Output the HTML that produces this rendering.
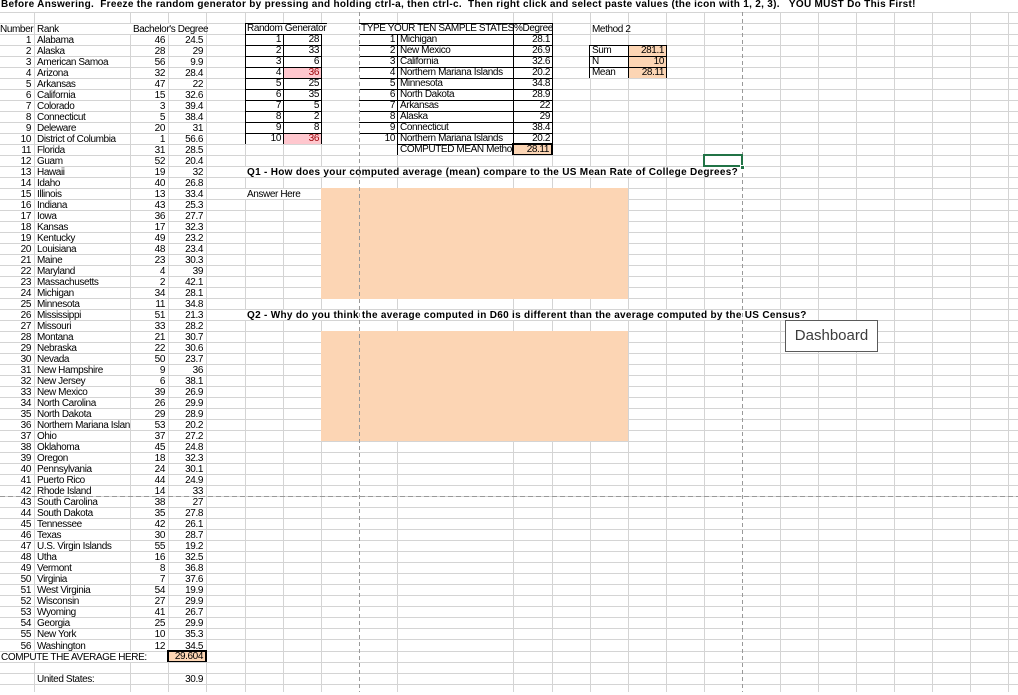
<!DOCTYPE html>
<html><head><meta charset="utf-8"><style>
*{margin:0;padding:0;box-sizing:border-box}
body{width:1018px;height:692px;overflow:hidden;background:#fff;font-family:"Liberation Sans",Arial,sans-serif;font-size:10px;color:#000;position:relative}
.v{position:absolute;top:12px;height:680px;width:1px;background:#d4d4d4;z-index:0}
#rows{position:absolute;left:0;top:0;width:1018px;z-index:1}
.r{position:relative;height:11px;border-top:1px solid #d4d4d4}
.t{height:12px;border:0}
.c{position:absolute;top:0;height:10px;line-height:11px;white-space:nowrap;letter-spacing:-.4px}
.a{left:0;width:34px;text-align:right;padding-right:3px}
.bb{left:34px;width:96px;padding-left:3px;overflow:hidden}
.cc{left:130px;width:38px;text-align:right;padding-right:3px}
.dd{left:168px;width:38px;text-align:right;padding-right:3px}
.x{border:1px solid #000;top:-1px;height:12px;line-height:10px;background:#fff;overflow:hidden}
.rt{text-align:right;padding-right:2px}
.lt{padding-left:2px}
.F{left:245px;width:39px}.G{left:283px;width:39px}.I{left:359px;width:39px;border-left:0}
.J{left:397px;width:117px}.K{left:513px;width:40px}.M{left:589px;width:40px}.N{left:628px;width:39px}
.red{background:#ffc7ce;color:#9c0006}
.pe{background:#fcd5b4}
.w{background:#fff}
.bold{font-weight:bold;letter-spacing:.3px}
.box{position:absolute;background:#fcd5b4;z-index:2}
.dv{position:absolute;top:12px;height:680px;width:1px;z-index:3;background:repeating-linear-gradient(to bottom,#999 0 4px,transparent 4px 7px)}
.dh{position:absolute;left:0;width:1018px;height:1px;top:496px;z-index:3;background:repeating-linear-gradient(to right,#999 0 5px,transparent 5px 8px)}
</style></head><body>
<div class="v" style="left:34px"></div><div class="v" style="left:130px"></div><div class="v" style="left:168px"></div><div class="v" style="left:206px"></div><div class="v" style="left:245px"></div><div class="v" style="left:283px"></div><div class="v" style="left:321px"></div><div class="v" style="left:397px"></div><div class="v" style="left:513px"></div><div class="v" style="left:552px"></div><div class="v" style="left:590px"></div><div class="v" style="left:628px"></div><div class="v" style="left:666px"></div><div class="v" style="left:704px"></div><div class="v" style="left:780px"></div><div class="v" style="left:818px"></div><div class="v" style="left:856px"></div><div class="v" style="left:894px"></div><div class="v" style="left:932px"></div><div class="v" style="left:970px"></div><div class="v" style="left:1008px"></div>

<div id="rows">
<div class="r t"><div class="c bold w" style="left:0;width:1018px;height:12px;line-height:10px;padding-left:1px">Before Answering.&nbsp; Freeze the random generator by pressing and holding ctrl-a, then ctrl-c.&nbsp; Then right click and select paste values (the icon with 1, 2, 3).&nbsp;&nbsp; YOU MUST Do This First!</div></div>
<div class="r"></div>
<div class="r"><div class="c w" style="left:0;width:34px;overflow:hidden">Number</div><div class="c bb">Rank</div><div class="c w" style="left:130px;width:76px;padding-left:3px">Bachelor's Degree</div><div class="c x w" style="left:245px;width:82px;border-right:0;border-bottom:0;padding-left:1px;overflow:visible">Random Generator</div><div class="c x I w" style="width:155px;border-right:0;border-bottom:0;padding-left:2px">TYPE YOUR TEN SAMPLE STATES</div><div class="c x K">%Degree</div><div class="c" style="left:592px">Method 2</div></div>
<div class="r"><div class="c a">1</div><div class="c bb">Alabama</div><div class="c cc">46</div><div class="c dd">24.5</div><div class="c x F rt">1</div><div class="c x G rt">28</div><div class="c x I rt">1</div><div class="c x J lt">Michigan</div><div class="c x K rt">28.1</div></div>
<div class="r"><div class="c a">2</div><div class="c bb">Alaska</div><div class="c cc">28</div><div class="c dd">29</div><div class="c x F rt">2</div><div class="c x G rt">33</div><div class="c x I rt">2</div><div class="c x J lt">New Mexico</div><div class="c x K rt">26.9</div><div class="c x M lt">Sum</div><div class="c x N rt pe">281.1</div></div>
<div class="r"><div class="c a">3</div><div class="c bb">American Samoa</div><div class="c cc">56</div><div class="c dd">9.9</div><div class="c x F rt">3</div><div class="c x G rt">6</div><div class="c x I rt">3</div><div class="c x J lt">California</div><div class="c x K rt">32.6</div><div class="c x M lt">N</div><div class="c x N rt pe">10</div></div>
<div class="r"><div class="c a">4</div><div class="c bb">Arizona</div><div class="c cc">32</div><div class="c dd">28.4</div><div class="c x F rt">4</div><div class="c x G rt red">36</div><div class="c x I rt">4</div><div class="c x J lt">Northern Mariana Islands</div><div class="c x K rt">20.2</div><div class="c x M lt">Mean</div><div class="c x N rt pe">28.11</div></div>
<div class="r"><div class="c a">5</div><div class="c bb">Arkansas</div><div class="c cc">47</div><div class="c dd">22</div><div class="c x F rt">5</div><div class="c x G rt">25</div><div class="c x I rt">5</div><div class="c x J lt">Minnesota</div><div class="c x K rt">34.8</div></div>
<div class="r"><div class="c a">6</div><div class="c bb">California</div><div class="c cc">15</div><div class="c dd">32.6</div><div class="c x F rt">6</div><div class="c x G rt">35</div><div class="c x I rt">6</div><div class="c x J lt">North Dakota</div><div class="c x K rt">28.9</div></div>
<div class="r"><div class="c a">7</div><div class="c bb">Colorado</div><div class="c cc">3</div><div class="c dd">39.4</div><div class="c x F rt">7</div><div class="c x G rt">5</div><div class="c x I rt">7</div><div class="c x J lt">Arkansas</div><div class="c x K rt">22</div></div>
<div class="r"><div class="c a">8</div><div class="c bb">Connecticut</div><div class="c cc">5</div><div class="c dd">38.4</div><div class="c x F rt">8</div><div class="c x G rt">2</div><div class="c x I rt">8</div><div class="c x J lt">Alaska</div><div class="c x K rt">29</div></div>
<div class="r"><div class="c a">9</div><div class="c bb">Deleware</div><div class="c cc">20</div><div class="c dd">31</div><div class="c x F rt">9</div><div class="c x G rt">8</div><div class="c x I rt">9</div><div class="c x J lt">Connecticut</div><div class="c x K rt">38.4</div></div>
<div class="r"><div class="c a">10</div><div class="c bb">District of Columbia</div><div class="c cc">1</div><div class="c dd">56.6</div><div class="c x F rt">10</div><div class="c x G rt red">36</div><div class="c x I rt">10</div><div class="c x J lt">Northern Mariana Islands</div><div class="c x K rt">20.2</div></div>
<div class="r"><div class="c a">11</div><div class="c bb">Florida</div><div class="c cc">31</div><div class="c dd">28.5</div><div class="c x I" style="border-right:0;border-top:0;top:0;height:11px"></div><div class="c x J lt">COMPUTED MEAN Method</div><div class="c x K rt pe" style="border-width:2px;top:-2px;height:13px;left:512px;width:41px;line-height:9px">28.11</div></div>
<div class="r"><div class="c a">12</div><div class="c bb">Guam</div><div class="c cc">52</div><div class="c dd">20.4</div></div>
<div class="r"><div class="c a">13</div><div class="c bb">Hawaii</div><div class="c cc">19</div><div class="c dd">32</div><div class="c bold w" style="left:245px;width:496px;padding-left:2px">Q1 - How does your computed average (mean) compare to the US Mean Rate of College Degrees?</div></div>
<div class="r"><div class="c a">14</div><div class="c bb">Idaho</div><div class="c cc">40</div><div class="c dd">26.8</div></div>
<div class="r"><div class="c a">15</div><div class="c bb">Illinois</div><div class="c cc">13</div><div class="c dd">33.4</div><div class="c w" style="left:245px;width:76px;padding-left:2px">Answer Here</div></div>
<div class="r"><div class="c a">16</div><div class="c bb">Indiana</div><div class="c cc">43</div><div class="c dd">25.3</div></div>
<div class="r"><div class="c a">17</div><div class="c bb">Iowa</div><div class="c cc">36</div><div class="c dd">27.7</div></div>
<div class="r"><div class="c a">18</div><div class="c bb">Kansas</div><div class="c cc">17</div><div class="c dd">32.3</div></div>
<div class="r"><div class="c a">19</div><div class="c bb">Kentucky</div><div class="c cc">49</div><div class="c dd">23.2</div></div>
<div class="r"><div class="c a">20</div><div class="c bb">Louisiana</div><div class="c cc">48</div><div class="c dd">23.4</div></div>
<div class="r"><div class="c a">21</div><div class="c bb">Maine</div><div class="c cc">23</div><div class="c dd">30.3</div></div>
<div class="r"><div class="c a">22</div><div class="c bb">Maryland</div><div class="c cc">4</div><div class="c dd">39</div></div>
<div class="r"><div class="c a">23</div><div class="c bb">Massachusetts</div><div class="c cc">2</div><div class="c dd">42.1</div></div>
<div class="r"><div class="c a">24</div><div class="c bb">Michigan</div><div class="c cc">34</div><div class="c dd">28.1</div></div>
<div class="r"><div class="c a">25</div><div class="c bb">Minnesota</div><div class="c cc">11</div><div class="c dd">34.8</div></div>
<div class="r"><div class="c a">26</div><div class="c bb">Mississippi</div><div class="c cc">51</div><div class="c dd">21.3</div><div class="c bold w" style="left:245px;width:572px;padding-left:2px">Q2 - Why do you think the average computed in D60 is different than the average computed by the US Census?</div></div>
<div class="r"><div class="c a">27</div><div class="c bb">Missouri</div><div class="c cc">33</div><div class="c dd">28.2</div></div>
<div class="r"><div class="c a">28</div><div class="c bb">Montana</div><div class="c cc">21</div><div class="c dd">30.7</div></div>
<div class="r"><div class="c a">29</div><div class="c bb">Nebraska</div><div class="c cc">22</div><div class="c dd">30.6</div></div>
<div class="r"><div class="c a">30</div><div class="c bb">Nevada</div><div class="c cc">50</div><div class="c dd">23.7</div></div>
<div class="r"><div class="c a">31</div><div class="c bb">New Hampshire</div><div class="c cc">9</div><div class="c dd">36</div></div>
<div class="r"><div class="c a">32</div><div class="c bb">New Jersey</div><div class="c cc">6</div><div class="c dd">38.1</div></div>
<div class="r"><div class="c a">33</div><div class="c bb">New Mexico</div><div class="c cc">39</div><div class="c dd">26.9</div></div>
<div class="r"><div class="c a">34</div><div class="c bb">North Carolina</div><div class="c cc">26</div><div class="c dd">29.9</div></div>
<div class="r"><div class="c a">35</div><div class="c bb">North Dakota</div><div class="c cc">29</div><div class="c dd">28.9</div></div>
<div class="r"><div class="c a">36</div><div class="c bb">Northern Mariana Islands</div><div class="c cc">53</div><div class="c dd">20.2</div></div>
<div class="r"><div class="c a">37</div><div class="c bb">Ohio</div><div class="c cc">37</div><div class="c dd">27.2</div></div>
<div class="r"><div class="c a">38</div><div class="c bb">Oklahoma</div><div class="c cc">45</div><div class="c dd">24.8</div></div>
<div class="r"><div class="c a">39</div><div class="c bb">Oregon</div><div class="c cc">18</div><div class="c dd">32.3</div></div>
<div class="r"><div class="c a">40</div><div class="c bb">Pennsylvania</div><div class="c cc">24</div><div class="c dd">30.1</div></div>
<div class="r"><div class="c a">41</div><div class="c bb">Puerto Rico</div><div class="c cc">44</div><div class="c dd">24.9</div></div>
<div class="r"><div class="c a">42</div><div class="c bb">Rhode Island</div><div class="c cc">14</div><div class="c dd">33</div></div>
<div class="r"><div class="c a">43</div><div class="c bb">South Carolina</div><div class="c cc">38</div><div class="c dd">27</div></div>
<div class="r"><div class="c a">44</div><div class="c bb">South Dakota</div><div class="c cc">35</div><div class="c dd">27.8</div></div>
<div class="r"><div class="c a">45</div><div class="c bb">Tennessee</div><div class="c cc">42</div><div class="c dd">26.1</div></div>
<div class="r"><div class="c a">46</div><div class="c bb">Texas</div><div class="c cc">30</div><div class="c dd">28.7</div></div>
<div class="r"><div class="c a">47</div><div class="c bb">U.S. Virgin Islands</div><div class="c cc">55</div><div class="c dd">19.2</div></div>
<div class="r"><div class="c a">48</div><div class="c bb">Utha</div><div class="c cc">16</div><div class="c dd">32.5</div></div>
<div class="r"><div class="c a">49</div><div class="c bb">Vermont</div><div class="c cc">8</div><div class="c dd">36.8</div></div>
<div class="r"><div class="c a">50</div><div class="c bb">Virginia</div><div class="c cc">7</div><div class="c dd">37.6</div></div>
<div class="r"><div class="c a">51</div><div class="c bb">West Virginia</div><div class="c cc">54</div><div class="c dd">19.9</div></div>
<div class="r"><div class="c a">52</div><div class="c bb">Wisconsin</div><div class="c cc">27</div><div class="c dd">29.9</div></div>
<div class="r"><div class="c a">53</div><div class="c bb">Wyoming</div><div class="c cc">41</div><div class="c dd">26.7</div></div>
<div class="r"><div class="c a">54</div><div class="c bb">Georgia</div><div class="c cc">25</div><div class="c dd">29.9</div></div>
<div class="r"><div class="c a">55</div><div class="c bb">New York</div><div class="c cc">10</div><div class="c dd">35.3</div></div>
<div class="r" style="height:12px"><div class="c a" style="top:1px">56</div><div class="c bb" style="top:1px">Washington</div><div class="c cc" style="top:1px">12</div><div class="c dd" style="top:1px">34.5</div></div>
<div class="r"><div class="c w" style="left:0;width:167px;padding-left:1px">COMPUTE THE AVERAGE HERE:</div><div class="c x pe rt" style="left:167px;width:40px;border-width:2px;top:-2px;height:13px;line-height:10px">29.604</div></div>
<div class="r"></div>
<div class="r"><div class="c bb">United States:</div><div class="c dd">30.9</div></div>
<div class="r"></div>
</div>

<div class="box" style="left:321px;top:188px;width:307px;height:111px"></div>
<div class="box" style="left:321px;top:331px;width:307px;height:110px"></div>
<div class="dv" style="left:359px"></div>
<div class="dv" style="left:742px"></div>
<div class="dh"></div>
<div style="position:absolute;left:703px;top:154px;width:40px;height:13px;border:2px solid #217346;z-index:4"></div>
<div style="position:absolute;left:740px;top:165px;width:5px;height:5px;background:#217346;border:1px solid #fff;z-index:5"></div>
<div style="position:absolute;left:785px;top:320px;width:93px;height:32px;border:1px solid #5a5a5a;background:#fff;z-index:5;font-size:15px;line-height:30px;text-align:center;color:#3c3c3c">Dashboard</div>
</body></html>
